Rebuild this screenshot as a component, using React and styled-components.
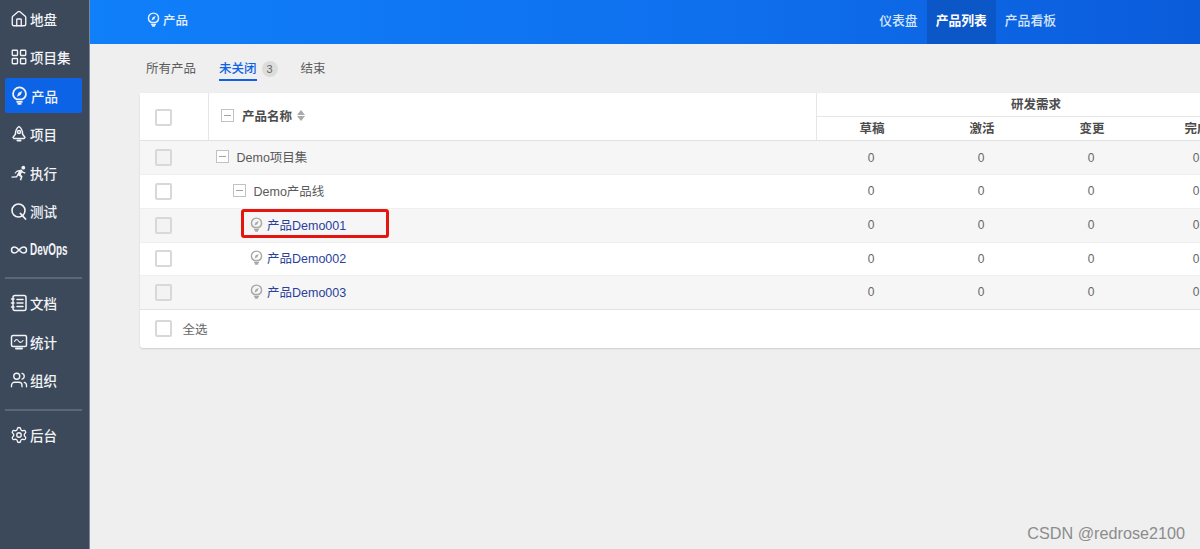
import styled, { createGlobalStyle } from "styled-components"
import { House, LayoutGrid, Infinity as InfinityIcon, Users, Settings } from "lucide-react"

const FONT = `"Liberation Sans", "Noto Sans CJK SC", sans-serif`

const GlobalStyle = createGlobalStyle`
    html, body { margin: 0; padding: 0; background: #efefef; }
    body { font-family: ${FONT}; font-size: 12.5px; color: #555; }
    * { box-sizing: border-box; }
`

const Page = styled.div`
    position: relative;
    display: flex;
    width: 1200px;
    height: 549px;
    overflow: hidden;
`

const Sidebar = styled.nav`
    width: 90px;
    flex: none;
    padding: 1px 7px 0 5px;
    background: #3c495b;
    border-right: 1px solid #7a8798;
    display: flex;
    flex-direction: column;
    gap: 3.5px;
`

const NavItem = styled.a`
    height: 35px;
    display: flex;
    align-items: center;
    gap: 2px;
    padding-left: 5px;
    border-radius: 2px;
    color: #f2f4f7;
    font-size: 13.5px;
    font-weight: 500;
    white-space: nowrap;
    background: ${(p) => (p.$active ? "#0c63e6" : "transparent")};
    svg { flex: none; }
`

const NavDivider = styled.div`
    height: 2px;
    margin: ${(p) => (p.$low ? "8px 0 2.5px" : "6px 0 3.5px")};
    background: #5a6778;
`

const DevOpsLabel = styled.span`
    display: inline-block;
    font-weight: 700;
    font-size: 16px;
    transform: scaleX(0.62);
    transform-origin: left center;
`

const Content = styled.div`
    flex: 1;
    min-width: 0;
    display: flex;
    flex-direction: column;
`

const Topbar = styled.header`
    height: 44px;
    flex: none;
    padding-left: 56px;
    display: flex;
    align-items: center;
    justify-content: space-between;
    color: #fff;
    background: linear-gradient(90deg, #107ffa 0%, #0f70ee 55%, #0b5cdb 100%);
`

const Crumb = styled.div`
    display: flex;
    align-items: center;
    gap: 2px;
    padding-bottom: 6px;
    font-size: 12.5px;
    font-weight: 500;
    color: #e4effd;
`

const TopNav = styled.div`
    display: flex;
    height: 100%;
    margin-right: 135px;
`

const TopLink = styled.a`
    display: flex;
    align-items: center;
    padding: 0 9px 6px;
    font-size: 12.8px;
    font-weight: ${(p) => (p.$active ? 700 : 500)};
    color: ${(p) => (p.$active ? "#fff" : "#d5e6fc")};
    background: ${(p) => (p.$active ? "#0c57c7" : "transparent")};
`

const Main = styled.main`
    flex: 1;
    padding: 12px 0 0 50px;
`

const Tabs = styled.div`
    display: flex;
    align-items: flex-start;
    gap: 23px;
    height: 37px;
    padding-left: 6px;
    font-size: 12.5px;
`

const Tab = styled.a`
    display: block;
    height: 25px;
    line-height: 26px;
    color: ${(p) => (p.$active ? "#0c63e6" : "#5c5c5c")};
    font-weight: ${(p) => (p.$active ? 500 : 400)};
    border-bottom: 2px solid ${(p) => (p.$active ? "#0c63e6" : "transparent")};
`

const TabGroup = styled.div`
    display: flex;
    align-items: flex-start;
    gap: 5px;
`

const Count = styled.span`
    width: 16px;
    height: 16px;
    margin-top: 5px;
    border-radius: 50%;
    background: #dcdcdc;
    color: #666;
    font-size: 11px;
    line-height: 16px;
    text-align: center;
`

const Card = styled.section`
    position: relative;
    width: 1100px;
    background: #fff;
    border-radius: 3px 0 0 3px;
    box-shadow: 0 1px 2px rgba(0, 0, 0, 0.14);
`

const Row = styled.div`
    display: flex;
    height: ${(p) => p.$height || 33.5}px;
    background: ${(p) => (p.$striped ? "#f6f6f6" : "#fff")};
    border-bottom: 1px solid ${(p) => (p.$strong ? "#e2e2e2" : "#efefef")};
`

const CheckCell = styled.div`
    width: 68px;
    flex: none;
    padding: ${(p) => (p.$head ? "1px" : "0")} 0 0 14.5px;
    display: flex;
    align-items: center;
`

const Check = styled.span`
    width: 17px;
    height: 17px;
    border: 2px solid #d8d8d8;
    border-radius: 2px;
    background: ${(p) => (p.$striped ? "#f3f3f3" : "#fff")};
`

const NameCell = styled.div`
    width: 608px;
    flex: none;
    display: flex;
    align-items: center;
    gap: ${(p) => (p.$leaf ? 3 : 7.5)}px;
    padding: 0 0 2px ${(p) => p.$indent}px;
    color: #5a5a5a;
`

const HeadName = styled(NameCell)`
    gap: 8px;
    font-weight: 700;
    font-size: 12.5px;
    color: #4c4c4c;
    border-left: 1px solid #e6e6e6;
    padding-bottom: 3px;
`

const Expander = styled.span`
    position: relative;
    width: 13px;
    height: 13px;
    flex: none;
    border: 1px solid #c2c2c2;
    background: #fff;
    &::after {
        content: "";
        position: absolute;
        left: 2px;
        right: 2px;
        top: 5px;
        height: 1px;
        background: #a3a3a3;
    }
`

const SortArrows = styled.span`
    display: inline-flex;
    flex-direction: column;
    gap: 1px;
    margin-left: -3px;
    &::before,
    &::after {
        content: "";
        border-left: 4px solid transparent;
        border-right: 4px solid transparent;
    }
    &::before { border-bottom: 5px solid #a9a9a9; }
    &::after { border-top: 5px solid #a9a9a9; }
`

const ProductLink = styled.a`
    color: #2b3f9c;
`

const Groups = styled.div`
    flex: 1;
    display: flex;
    flex-direction: column;
    border-left: 1px solid #e6e6e6;
    min-width: 0;
    overflow: hidden;
`

const GroupTitle = styled.div`
    height: 24px;
    line-height: 24px;
    width: 438px;
    text-align: center;
    font-weight: 700;
    font-size: 12.5px;
    color: #4c4c4c;
    border-bottom: 1px solid #e6e6e6;
`

const GroupCols = styled.div`
    display: flex;
    flex: 1;
`

const HeadCol = styled.div`
    width: ${(p) => p.$width}px;
    flex: none;
    text-align: center;
    line-height: 24px;
    font-weight: 700;
    font-size: 12.5px;
    color: #4c4c4c;
`

const NumCol = styled.div`
    width: ${(p) => p.$width}px;
    flex: none;
    display: flex;
    align-items: center;
    justify-content: center;
    font-size: 12px;
    color: #666;
`

const Footer = styled.div`
    display: flex;
    align-items: center;
    height: 38.5px;
    padding-left: 14.5px;
    gap: 11px;
    color: #666;
`

const Highlight = styled.div`
    position: absolute;
    left: 101px;
    top: 116px;
    width: 148px;
    height: 29px;
    border: 3px solid #e3170f;
    border-radius: 3px;
    pointer-events: none;
`

const Watermark = styled.div`
    position: absolute;
    right: 15px;
    bottom: 6px;
    font-size: 16.2px;
    color: #8c8c8c;
`

// lightbulb with a compass needle, used for products
function BulbIcon({ size = 16, color = "currentColor" }) {
    return (
        <svg width={size} height={size} viewBox="0 0 16 16" fill="none" stroke={color} strokeWidth="1.5" strokeLinecap="round">
            <path d="M5.600 11.200C3.700 10.300 2.600 8.600 2.600 6.600a5.400 5.400 0 0 1 10.800 0c0 2-1.100 3.700-3 4.600z" />
            <path d="M6 13.300h4M6.900 15h2.200" />
            <path d="M10.400 4.200 8.900 7.600 5.800 9l1.300-3.300z" fill={color} stroke="none" />
        </svg>
    )
}

function RocketIcon() {
    return (
        <svg width="18" height="18" viewBox="0 0 18 18" fill="none" stroke="currentColor" strokeWidth="1.500" strokeLinejoin="round">
            <path d="M9 1.500C6.300 3.300 5.400 6 5.400 9.300L3 12.400l.8 1h10.400l.8-1-2.400-3.100C12.600 6 11.700 3.300 9 1.500z" />
            <circle cx="9" cy="7" r="1.500" />
            <path d="M7.500 15.400h3" strokeWidth="2" strokeLinecap="round" />
        </svg>
    )
}

function RunnerIcon() {
    return (
        <svg width="18" height="18" viewBox="0 0 18 18" fill="currentColor">
            <circle cx="13.300" cy="3.700" r="1.900" />
            <path d="M7 6.400 11.600 5.600 13 7.400 15.600 8.500 15 9.700 11.900 8.500 10.900 10.600 12.600 12.500 11.200 16.500 9.800 16 10.700 13 8.300 11.400 6.900 13.600 1.500 13.700 1.500 12.500 6.200 12.300 8.700 7.400 6.900 7.900 5.400 9.800 4.500 9z" />
        </svg>
    )
}

function TestIcon() {
    return (
        <svg width="18" height="18" viewBox="0 0 18 18" fill="none" stroke="currentColor" strokeWidth="1.600" strokeLinecap="round">
            <circle cx="8.500" cy="8.500" r="6.500" />
            <path d="M10.500 11.500 15.500 17" strokeWidth="1.800" />
        </svg>
    )
}

function DocIcon() {
    return (
        <svg width="18" height="18" viewBox="0 0 18 18" fill="none" stroke="currentColor" strokeWidth="1.500" strokeLinecap="round">
            <rect x="3" y="1.500" width="13" height="15" rx="2" />
            <path d="M7 5.500h6M7 9h6M7 12.500h6" />
            <path d="M1.500 5h2.500M1.500 9h2.500M1.500 13h2.500" />
        </svg>
    )
}

function StatsIcon() {
    return (
        <svg width="18" height="18" viewBox="0 0 18 18" fill="none" stroke="currentColor" strokeWidth="1.500" strokeLinecap="round" strokeLinejoin="round">
            <rect x="1.500" y="2.500" width="15" height="11" rx="1.500" />
            <path d="M4.500 8.500c1.500-2.500 2.700-2.500 4-.5s2.700 1.800 4.500-.5" strokeWidth="1.100" />
            <path d="M6 15.500h6" strokeWidth="2" />
        </svg>
    )
}

const NAV_TOP = [
    { label: "地盘", icon: <House size={18} strokeWidth={1.8} /> },
    { label: "项目集", icon: <LayoutGrid size={18} strokeWidth={1.8} /> },
    { label: "产品", icon: <BulbIcon size={19} />, active: true },
    { label: "项目", icon: <RocketIcon /> },
    { label: "执行", icon: <RunnerIcon /> },
    { label: "测试", icon: <TestIcon /> },
    { label: <DevOpsLabel>DevOps</DevOpsLabel>, icon: <InfinityIcon size={18} strokeWidth={2} /> },
]
const NAV_MID = [
    { label: "文档", icon: <DocIcon /> },
    { label: "统计", icon: <StatsIcon /> },
    { label: "组织", icon: <Users size={18} strokeWidth={1.8} /> },
]
const NAV_BOTTOM = [{ label: "后台", icon: <Settings size={18} strokeWidth={1.8} /> }]

const ROWS = [
    { id: "Demo项目集", indent: 8, height: 34 },
    { id: "Demo产品线", indent: 25, height: 33.5 },
    { id: "产品Demo001", indent: 41, leaf: true, height: 34 },
    { id: "产品Demo002", indent: 41, leaf: true, height: 33.5 },
    { id: "产品Demo003", indent: 41, leaf: true, height: 33.5 },
]

const COLUMNS = [
    { name: "草稿", width: 110 },
    { name: "激活", width: 110 },
    { name: "变更", width: 110 },
    { name: "完成", width: 100 },
]

function NavList({ items }) {
    return items.map((item, i) => (
        <NavItem key={i} $active={item.active}>
            {item.icon}
            {item.label}
        </NavItem>
    ))
}

export default function App() {
    return (
        <Page>
            <GlobalStyle />
            <Sidebar>
                <NavList items={NAV_TOP} />
                <NavDivider />
                <NavList items={NAV_MID} />
                <NavDivider $low />
                <NavList items={NAV_BOTTOM} />
            </Sidebar>
            <Content>
                <Topbar>
                    <Crumb>
                        <BulbIcon size={15} /> 产品
                    </Crumb>
                    <TopNav>
                        <TopLink>仪表盘</TopLink>
                        <TopLink $active>产品列表</TopLink>
                        <TopLink>产品看板</TopLink>
                    </TopNav>
                </Topbar>
                <Main>
                    <Tabs>
                        <Tab>所有产品</Tab>
                        <TabGroup>
                            <Tab $active>未关闭</Tab>
                            <Count>3</Count>
                        </TabGroup>
                        <Tab>结束</Tab>
                    </Tabs>
                    <Card>
                        <Row $height={48} $strong>
                            <CheckCell $head><Check /></CheckCell>
                            <HeadName $indent={12}>
                                <Expander />
                                产品名称
                                <SortArrows />
                            </HeadName>
                            <Groups>
                                <GroupTitle>研发需求</GroupTitle>
                                <GroupCols>
                                    {COLUMNS.map((c) => <HeadCol key={c.name} $width={c.width}>{c.name}</HeadCol>)}
                                </GroupCols>
                            </Groups>
                        </Row>
                        {ROWS.map((row, i) => {
                            const striped = i % 2 === 0
                            return (
                                <Row key={row.id} $striped={striped} $height={row.height} $strong={i === ROWS.length - 1}>
                                    <CheckCell><Check $striped={striped} /></CheckCell>
                                    <NameCell $indent={row.indent} $leaf={row.leaf}>
                                        {row.leaf ? <BulbIcon size={15} color="#a8a8a8" /> : <Expander />}
                                        {row.leaf ? <ProductLink>{row.id}</ProductLink> : row.id}
                                    </NameCell>
                                    {COLUMNS.map((c) => <NumCol key={c.name} $width={c.width}>0</NumCol>)}
                                </Row>
                            )
                        })}
                        <Footer>
                            <Check />
                            全选
                        </Footer>
                        <Highlight />
                    </Card>
                </Main>
            </Content>
            <Watermark>CSDN @redrose2100</Watermark>
        </Page>
    )
}
